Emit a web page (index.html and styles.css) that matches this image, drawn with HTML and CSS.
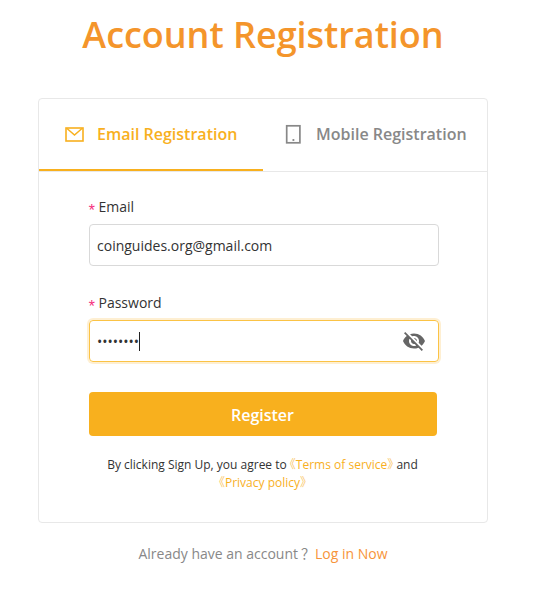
FILE: index.html
```html
<!DOCTYPE html>
<html lang="en">
<head>
  <meta charset="UTF-8" />
  <meta name="viewport" content="width=device-width, initial-scale=1.0"/>
  <title>Account Registration</title>
  <link rel="stylesheet" href="styles.css">
</head>
<body>
  <div class="container">
    <h1>Account Registration</h1>

    <div class="card">
      <div class="tabs">
        <div class="tab active">
          <svg class="mail-icon" width="20" height="16" viewBox="0 0 20 16" fill="none" stroke="currentColor">
            <rect x="1" y="2" width="17" height="13" stroke-width="1.6" />
            <path d="M2 2.5L9.5 9L17 2.5" stroke-width="1.5" />
          </svg>
          <span>Email Registration</span>
        </div>
        <div class="tab">
          <svg class="mobile-icon" width="16" height="20" viewBox="0 0 16 20" fill="none" stroke="currentColor">
            <rect x="1.7" y="1.8" width="13.2" height="17" stroke-width="1.7" />
            <path d="M7.2 16h2.4M8.4 15v2" stroke-width="1" />
          </svg>
          <span>Mobile Registration</span>
        </div>
      </div>

      <form>
        <label for="email"><span class="required">*</span>Email</label>
        <div class="field">
          <input type="text" id="email" value="coinguides.org@gmail.com" />
        </div>

        <label for="password"><span class="required">*</span>Password</label>
        <div class="field focused">
          <input type="text" id="password" value="••••••••" />
          <span class="caret"></span>
          <svg class="eye-icon" width="24" height="24" viewBox="0 0 24 24" fill="currentColor">
            <path d="M12 7c2.76 0 5 2.24 5 5 0 .65-.13 1.26-.36 1.83l2.92 2.92c1.51-1.26 2.7-2.89 3.43-4.75-1.73-4.39-6-7.5-11-7.5-1.4 0-2.74.25-3.98.7l2.16 2.16C10.74 7.13 11.35 7 12 7zM2 4.27l2.28 2.28.46.46C3.08 8.3 1.78 10.02 1 12c1.73 4.39 6 7.5 11 7.5 1.55 0 3.03-.3 4.38-.84l.42.42L19.73 22 21 20.73 3.27 3 2 4.27zM7.53 9.8l1.55 1.55c-.05.21-.08.43-.08.65 0 1.66 1.34 3 3 3 .22 0 .44-.03.65-.08l1.55 1.55c-.67.33-1.41.53-2.2.53-2.76 0-5-2.24-5-5 0-.79.2-1.53.53-2.2zm4.31-.78l3.15 3.15.02-.16c0-1.66-1.34-3-3-3l-.17.01z" />
          </svg>
        </div>

        <button type="submit">Register</button>
        <p class="terms">By clicking Sign Up, you agree to <a href="#"><span class="quote">《</span>Terms of service<span class="quote">》</span></a> and <br /><a href="#"><span class="quote">《</span>Privacy policy<span class="quote">》</span></a></p>
      </form>
    </div>

    <p class="login">Already have an account<span class="mark">？</span><a href="#">Log in Now</a></p>
  </div>
</body>
</html>
```

FILE: styles.css
```css
html, body {
  margin: 0;
  padding: 0;
  font-family: 'Open Sans', 'Noto Sans CJK SC', sans-serif;
  background: #fff;
  color: #333;
}
* {
  box-sizing: border-box;
}
.container {
  width: 450px;
  margin-left: 38px;
}
h1 {
  margin: 0;
  padding-top: 10px;
  height: 98px;
  font-size: 36px;
  line-height: 50px;
  font-weight: 600;
  letter-spacing: -0.03px;
  text-align: center;
  color: #f4952b;
}
a {
  color: #f8b01e;
  text-decoration: none;
}
.card {
  height: 425px;
  border: 1px solid #e8e8e8;
  border-radius: 4px;
}
.tabs {
  display: flex;
  height: 73px;
  border-bottom: 1px solid #e8e8e8;
}
.tab {
  display: flex;
  align-items: center;
  width: 224px;
  height: 72px;
  padding-left: 22px;
  border-bottom: 2px solid transparent;
  font-size: 16px;
  font-weight: 600;
  white-space: nowrap;
  color: #888;
}
.tab.active {
  padding-left: 26px;
  border-bottom-color: #f8b01e;
  color: #f8b01e;
}
.mail-icon {
  margin-right: 12px;
}
.mobile-icon {
  margin-right: 15px;
}
form {
  padding: 24px 48px 0 50px;
}
label {
  display: block;
  height: 28px;
  font-size: 14px;
  line-height: 22px;
}
.required {
  display: inline-block;
  width: 11px;
  margin-left: -2px;
  margin-right: 0.5px;
  font-family: 'Liberation Mono', monospace;
  font-size: 16px;
  line-height: 14px;
  vertical-align: -4px;
  color: #f5317f;
}
.field {
  position: relative;
  width: 350px;
  height: 42px;
  margin-bottom: 26px;
  border: 1px solid #d9d9d9;
  border-radius: 4px;
}
.field.focused {
  margin-bottom: 30px;
  border-color: #fbc345;
  box-shadow: 0 0 0 2px rgba(248,176,30,0.2);
}
input {
  display: block;
  width: 100%;
  height: 40px;
  padding: 0 7px;
  border: none;
  outline: none;
  background: transparent;
  font-family: inherit;
  font-size: 14px;
  color: #333;
}
.caret {
  position: absolute;
  top: 11px;
  left: 49px;
  width: 1px;
  height: 19px;
  background: #222;
}
.eye-icon {
  position: absolute;
  top: 8px;
  right: 12px;
  color: #666;
}
button {
  display: block;
  width: 348px;
  height: 44px;
  padding: 2px 1px 0 0;
  border: none;
  border-radius: 4px;
  background-color: #f8b01e;
  font-family: inherit;
  font-size: 16px;
  font-weight: 600;
  color: #fff;
}
.terms {
  margin: 20px 0 0 -3px;
  font-size: 12px;
  line-height: 18px;
  text-align: center;
  white-space: nowrap;
  font-feature-settings: "halt";
}
.quote {
  opacity: 0.7;
}
.login {
  margin: 20px 0 0;
  font-size: 14px;
  line-height: 22px;
  text-align: center;
  color: #888;
}
.mark {
  margin: 0 0 0 3px;
}
.login a {
  color: #f7943a;
}
```
